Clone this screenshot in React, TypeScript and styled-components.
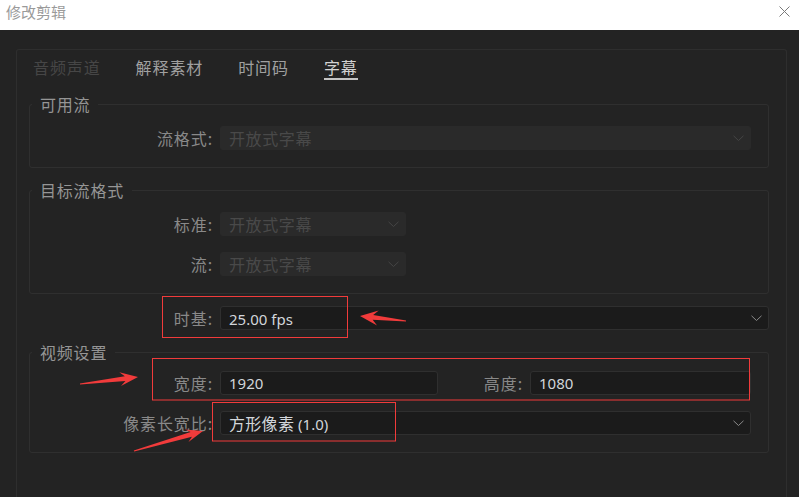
import styled, { createGlobalStyle } from 'styled-components';

const GlobalStyle = createGlobalStyle`
  html, body {
    margin: 0;
    padding: 0;
    background: #232323;
    font-family: "Noto Sans CJK SC", "Noto Sans", sans-serif;
  }
`;

const Page = styled.div`
  position: relative;
  width: 799px;
  height: 497px;
  overflow: hidden;
  display: flex;
  flex-direction: column;
  background: #232323;
`;

const TitleBar = styled.div`
  height: 30px;
  flex: none;
  background: #ffffff;
  display: flex;
  align-items: flex-start;
  justify-content: space-between;
  padding: 2px 9px 0 6px;
  box-sizing: border-box;
`;

const Title = styled.div`
  font-size: 15px;
  line-height: 20px;
  color: #9a9a9a;
`;

const Close = styled.div`
  margin-top: 4px;
  width: 11px;
  height: 11px;
  display: flex;
`;

const Body = styled.div`
  flex: 1;
  display: flex;
  padding: 19px 12px 0 16px;
  min-height: 0;
`;

const Panel = styled.div`
  flex: 1;
  border: 1px solid #2e2e2e;
  border-bottom: none;
  border-radius: 3px 3px 0 0;
  display: flex;
  flex-direction: column;
`;

const Tabs = styled.div`
  display: flex;
  gap: 35px;
  padding: 7px 0 0 16px;
`;

const Tab = styled.div<{ $state: 'off' | 'on' | 'active' }>`
  font-size: 16px;
  line-height: 20px;
  letter-spacing: 0.9px;
  padding-bottom: 1px;
  border-bottom: 2px solid ${(p) => (p.$state === 'active' ? '#c4c4c4' : 'transparent')};
  color: ${(p) => (p.$state === 'off' ? '#464646' : p.$state === 'active' ? '#d2d2d2' : '#a0a0a0')};
`;

const Content = styled.div`
  display: flex;
  flex-direction: column;
  gap: 12px;
  padding: 14px 17px 0 12px;
`;

const Group = styled.fieldset<{ $top: number }>`
  margin: 0;
  border: 1px solid #2f2f2f;
  border-radius: 3px;
  padding: ${(p) => p.$top}px 17px 17px 0;
  display: flex;
  flex-direction: column;
  gap: 16px;
  min-width: 0;

  legend {
    margin-left: 2px;
    padding: 0 8px;
    font-size: 16px;
    line-height: 20px;
    color: #959595;
    letter-spacing: 0.8px;
  }
`;

const Row = styled.div<{ $indent?: number }>`
  display: flex;
  align-items: center;
  gap: 7px;
  padding-left: ${(p) => p.$indent ?? 0}px;
`;

const Label = styled.div<{ $w: number }>`
  width: ${(p) => p.$w}px;
  flex: none;
  text-align: right;
  font-size: 16px;
  line-height: 24px;
  letter-spacing: 0.9px;
  color: #898989;
  white-space: nowrap;
`;

const Control = styled.div<{ $disabled?: boolean; $w?: number }>`
  height: 24px;
  box-sizing: border-box;
  ${(p) => (p.$w ? `width: ${p.$w}px; flex: none;` : 'flex: 1;')}
  display: flex;
  align-items: center;
  justify-content: space-between;
  padding: 0 6px 0 8px;
  border-radius: 3px;
  border: 1px solid ${(p) => (p.$disabled ? '#2a2a2a' : '#2f2f2f')};
  background: ${(p) => (p.$disabled ? '#2a2a2a' : '#1b1b1b')};
  color: ${(p) => (p.$disabled ? '#494949' : '#d2d6da')};
  font-size: 16px;
  letter-spacing: ${(p) => (p.$disabled ? '0.6px' : '0.3px')};
  white-space: nowrap;
`;

const Num = styled.span`
  font-family: "Noto Sans", "Noto Sans CJK SC", sans-serif;
  font-size: 15px;
  letter-spacing: 0;
`;

function Chevron({ dim }: { dim?: boolean }) {
  return (
    <svg width="11" height="7" viewBox="0 0 11 7">
      <polyline points="0.5,0.8 5.5,5.5 10.5,0.8" fill="none" stroke={dim ? '#444' : '#8a8a8a'} strokeWidth="1" />
    </svg>
  );
}

function Select({ children, disabled, w }: { children: React.ReactNode; disabled?: boolean; w?: number }) {
  return (
    <Control $disabled={disabled} $w={w}>
      <span>{children}</span>
      <Chevron dim={disabled} />
    </Control>
  );
}

const Overlay = styled.svg`
  position: absolute;
  left: 0;
  top: 0;
  pointer-events: none;
`;

type P = [number, number];

function arrowPoints(tail: P, tip: P, head: number, half: number): string {
  const dx = tip[0] - tail[0];
  const dy = tip[1] - tail[1];
  const len = Math.hypot(dx, dy);
  const ux = dx / len;
  const uy = dy / len;
  const nx = -uy;
  const ny = ux;
  const at = (d: number, s: number): P => [tip[0] - ux * d + nx * s, tip[1] - uy * d + ny * s];
  const pts: P[] = [
    [tail[0] + nx * 0.6, tail[1] + ny * 0.6],
    at(head * 0.72, 2.4),
    at(head, half),
    tip,
    at(head, -half),
    at(head * 0.72, -2.4),
    [tail[0] - nx * 0.6, tail[1] - ny * 0.6],
  ];
  return pts.map((p) => p.join(',')).join(' ');
}

function Annotations() {
  const red = '#f13b3b';
  return (
    <Overlay width="799" height="497" viewBox="0 0 799 497">
      <rect x="162.5" y="296.5" width="185" height="41" fill="none" stroke={red} />
      <rect x="152.5" y="358.5" width="597" height="41.5" fill="none" stroke={red} />
      <rect x="212.5" y="402.5" width="183" height="38.5" fill="none" stroke={red} />
      <polygon points={arrowPoints([406, 321], [360, 316], 18, 7.5)} fill={red} />
      <polygon points={arrowPoints([80, 384], [138, 377], 18, 7)} fill={red} />
      <polygon points={arrowPoints([134, 451], [203, 431], 17, 6.5)} fill={red} />
    </Overlay>
  );
}

export default function App() {
  return (
    <>
      <GlobalStyle />
      <Page>
        <TitleBar>
          <Title>修改剪辑</Title>
          <Close>
            <svg width="11" height="11" viewBox="0 0 11 11">
              <path d="M0.5 0.5 L10.5 10.5 M10.5 0.5 L0.5 10.5" stroke="#7a7a7a" strokeWidth="1" />
            </svg>
          </Close>
        </TitleBar>
        <Body>
          <Panel>
            <Tabs>
              <Tab $state="off">音频声道</Tab>
              <Tab $state="on">解释素材</Tab>
              <Tab $state="on">时间码</Tab>
              <Tab $state="active">字幕</Tab>
            </Tabs>
            <Content>
              <Group $top={12}>
                <legend>可用流</legend>
                <Row>
                  <Label $w={183}>流格式:</Label>
                  <Select disabled>开放式字幕</Select>
                </Row>
              </Group>
              <Group $top={12}>
                <legend>目标流格式</legend>
                <Row>
                  <Label $w={183}>标准:</Label>
                  <Select disabled w={186}>开放式字幕</Select>
                </Row>
                <Row>
                  <Label $w={183}>流:</Label>
                  <Select disabled w={186}>开放式字幕</Select>
                </Row>
              </Group>
              <Row $indent={1}>
                <Label $w={183}>时基:</Label>
                <Select>
                  <Num>25.00 fps</Num>
                </Select>
              </Row>
              <Group $top={9}>
                <legend>视频设置</legend>
                <Row>
                  <Label $w={183}>宽度:</Label>
                  <Control $w={218}>
                    <Num>1920</Num>
                  </Control>
                  <Label $w={78}>高度:</Label>
                  <Control>
                    <Num>1080</Num>
                  </Control>
                </Row>
                <Row>
                  <Label $w={183}>像素长宽比:</Label>
                  <Select>
                    方形像素 <Num>(1.0)</Num>
                  </Select>
                </Row>
              </Group>
            </Content>
          </Panel>
        </Body>
        <Annotations />
      </Page>
    </>
  );
}
